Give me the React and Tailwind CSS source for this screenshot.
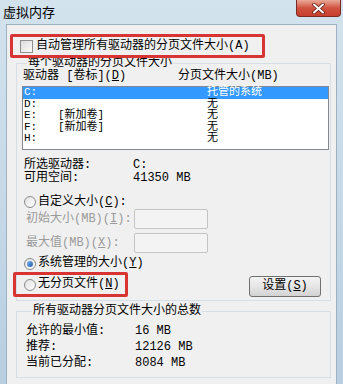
const font = "font-['Liberation_Mono','Noto_Sans_CJK_SC',monospace]";

const drives = [
  { d: 'C:', l: '', s: '托管的系统', sel: true },
  { d: 'D:', l: '', s: '无' },
  { d: 'E:', l: '[新加卷]', s: '无' },
  { d: 'F:', l: '[新加卷]', s: '无' },
  { d: 'H:', l: '', s: '无' },
];

const Radio = ({ checked }) => (
  <span className="w-[12px] h-[12px] rounded-full border border-[#8a8a8a] bg-gradient-to-br from-[#e2e2e2] to-[#ffffff] flex items-center justify-center shrink-0">
    {checked && <span className="w-[6px] h-[6px] rounded-full bg-gradient-to-br from-[#7db4ec] to-[#1c5aa8]" />}
  </span>
);

const Box = () => (
  <span className="w-[74px] h-[20px] border border-[#c4c4c4] rounded-[2px] bg-[#f3f3f3]" />
);

const App = () => {
  return (
    <div className={`w-[343px] h-[384px] overflow-hidden bg-gradient-to-b from-[#d3e3ee] to-[#b8cfe1] flex flex-col text-[12px] text-black ${font}`}>
      <div className="h-[24px] flex items-start justify-between shrink-0">
        <span className="pl-[3px] pt-[4px] text-[13px] leading-[16px] font-['Noto_Sans_CJK_SC',sans-serif]">虚拟内存</span>
        <span className="mr-[2px] w-[45px] h-[17px] rounded-b-[4px] border border-t-0 border-[#7a2a20] bg-gradient-to-b from-[#e9a898] via-[#d0523f] to-[#c7402e] flex items-center justify-center">
          <svg width="13" height="11" viewBox="0 0 13 11">
            <path d="M2 1.5 L11 9.5 M11 1.5 L2 9.5" stroke="#5a1c14" strokeWidth="3.6" strokeLinecap="round" />
            <path d="M2 1.5 L11 9.5 M11 1.5 L2 9.5" stroke="#ffffff" strokeWidth="2" strokeLinecap="round" />
          </svg>
        </span>
      </div>

      <div className="mx-[6px] flex-1 bg-[#f0f0f0] border-t border-l border-r border-[#9db1c3] flex flex-col">
        <div className="relative mt-[9px] ml-[3px] w-[255px] h-[24px] flex items-center pl-[10px] gap-[3px]">
          <span className="w-[13px] h-[13px] border border-[#8e8f8f] bg-gradient-to-br from-[#dcdcdc] to-[#fbfbfb] shrink-0" />
          <span className="leading-[13px] whitespace-nowrap">自动管理所有驱动器的分页文件大小(A)</span>
          <span className="absolute inset-0 z-10 border-[3px] border-[#d93434] rounded-[2px]" />
        </div>

        <fieldset className="ml-[9px] -mt-[1px] w-[315px] border border-[#d5dfe5] pl-[5px] pr-[1px] pb-[3px]">
          <legend className="ml-[5px] px-[1px] leading-[12px] whitespace-nowrap">每个驱动器的分页文件大小</legend>
          <div className="mt-[1px] h-[13px] leading-[13px] flex whitespace-nowrap">
            <span className="ml-[1px] w-[155px]">驱动器 [卷标](<u>D</u>)</span>
            <span>分页文件大小(MB)</span>
          </div>
          <div className="mt-[3px] w-[307px] h-[64px] border border-[#828790] bg-white text-[11px]">
            {drives.map((r) => (
              <div key={r.d} className={`h-[11.5px] leading-[11.5px] flex whitespace-nowrap ${r.sel ? 'bg-[#3399ff] text-white' : ''}`}>
                <span className="ml-[1px] w-[34px]">{r.d}</span>
                <span className="w-[149px]">{r.l}</span>
                <span>{r.s}</span>
              </div>
            ))}
          </div>

          <div className="mt-[9px] h-[13px] leading-[13px] flex whitespace-nowrap">
            <span className="ml-[2px] w-[109px]">所选驱动器:</span>
            <span>C:</span>
          </div>
          <div className="h-[13px] leading-[13px] flex whitespace-nowrap">
            <span className="ml-[2px] w-[109px]">可用空间:</span>
            <span>41350 MB</span>
          </div>

          <div className="mt-[10px] h-[14px] flex items-center gap-[2px] ml-[2px] whitespace-nowrap">
            <Radio />
            <span className="leading-[13px]">自定义大小(<u>C</u>):</span>
          </div>
          <div className="h-[20px] flex items-center whitespace-nowrap text-[#9a9a9a]">
            <span className="ml-[4px] w-[108px] leading-[13px]">初始大小(MB)(<u>I</u>):</span>
            <Box />
          </div>
          <div className="mt-[4px] h-[20px] flex items-center whitespace-nowrap text-[#9a9a9a]">
            <span className="ml-[4px] w-[108px] leading-[13px]">最大值(MB)(<u>X</u>):</span>
            <Box />
          </div>
          <div className="mt-[4px] h-[13px] flex items-center gap-[2px] ml-[2px] whitespace-nowrap">
            <Radio checked />
            <span className="leading-[13px]">系统管理的大小(<u>Y</u>)</span>
          </div>
          <div className="relative mt-[2px] h-[25px] flex items-center whitespace-nowrap">
            <span className="ml-[2px] flex items-center gap-[2px]">
              <Radio />
              <span className="leading-[13px]">无分页文件(<u>N</u>)</span>
            </span>
            <button className="ml-auto mr-[8px] self-end w-[72px] h-[21px] border border-[#707070] rounded-[3px] bg-gradient-to-b from-[#f3f3f3] via-[#e6e6e6] to-[#d2d2d2] leading-[13px]">
              设置(<u>S</u>)
            </button>
            <span className="absolute left-[-9px] top-0 w-[115px] h-[25px] z-10 border-[3px] border-[#d93434] rounded-[2px]" />
          </div>
        </fieldset>

        <fieldset className="ml-[9px] mt-[4px] w-[315px] border border-[#d5dfe5] pl-[9px] pt-[7px] pb-[8px] flex flex-col gap-[4px]">
          <legend className="ml-[6px] px-[1px] leading-[13px] whitespace-nowrap">所有驱动器分页文件大小的总数</legend>
          <div className="h-[12px] leading-[12px] flex whitespace-nowrap">
            <span className="w-[109px]">允许的最小值:</span>
            <span>16 MB</span>
          </div>
          <div className="h-[12px] leading-[12px] flex whitespace-nowrap">
            <span className="w-[109px]">推荐:</span>
            <span>12126 MB</span>
          </div>
          <div className="h-[12px] leading-[12px] flex whitespace-nowrap">
            <span className="w-[109px]">当前已分配:</span>
            <span>8084 MB</span>
          </div>
        </fieldset>
      </div>
    </div>
  );
};

export default App;
